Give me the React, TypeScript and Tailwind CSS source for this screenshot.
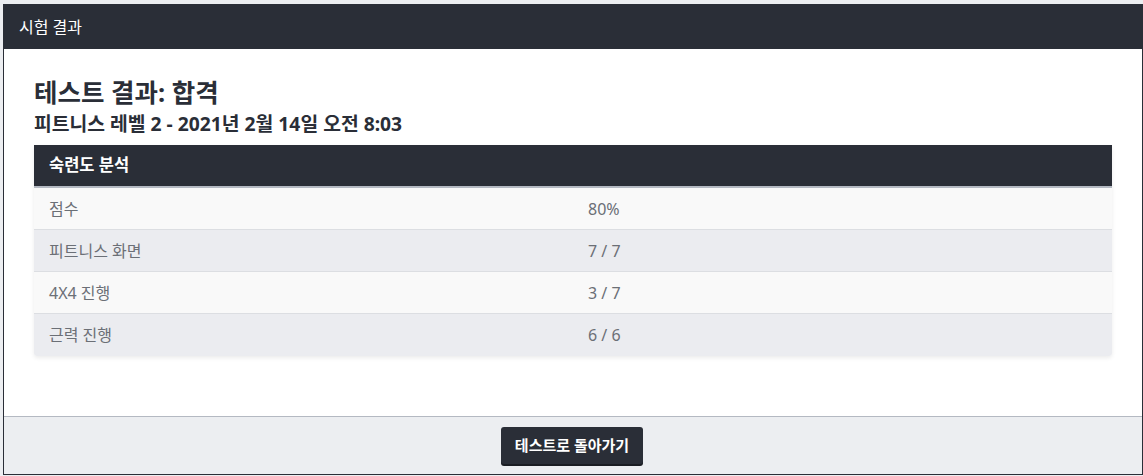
const rows = [
  { label: "점수", value: "80%" },
  { label: "피트니스 화면", value: "7 / 7" },
  { label: "4X4 진행", value: "3 / 7" },
  { label: "근력 진행", value: "6 / 6" },
];

export default function App() {
  return (
    <div
      className="w-[1143px] h-[476px] bg-[#eceef1] pt-[4px] pl-[3px]"
      style={{ fontFamily: '"Noto Sans", "Noto Sans CJK KR", sans-serif' }}
    >
      <div className="w-[1140px] h-[471px] bg-white border border-[#2a2e37] flex flex-col">
        {/* modal header */}
        <div className="h-[44px] bg-[#2a2e37] text-white text-[16px] flex items-center px-[15px] shrink-0">
          시험 결과
        </div>

        {/* body */}
        <div className="flex-1 px-[30px] pt-[27px]">
          <h1 className="text-[25.5px] font-bold text-[#2a2e37] leading-[32px]">테스트 결과: 합격</h1>
          <h2 className="text-[19.3px] font-bold text-[#2a2e37] leading-[26px] mt-[3px]">
            피트니스 레벨 2 - 2021년 2월 14일 오전 8:03
          </h2>

          <div className="mt-[8px] rounded-b-[3px] overflow-hidden shadow-[0_2px_4px_rgba(0,0,0,0.08)]">
            <div className="h-[41px] bg-[#2a2e37] text-white text-[16.5px] font-bold flex items-center px-[15px] border-b-2 border-[#b4b9c2] box-content">
              숙련도 분석
            </div>
            {rows.map((r, i) => (
              <div
                key={r.label}
                className={
                  "h-[42px] flex items-center text-[16px] text-[#6b6f76] " +
                  (i % 2 === 0 ? "bg-[#f9f9f9]" : "bg-[#ebecf0]") +
                  (i < rows.length - 1 ? " border-b border-[#dcdee2]" : "")
                }
              >
                <div className="w-1/2 px-[15px]">{r.label}</div>
                <div className="w-1/2 px-[15px]">{r.value}</div>
              </div>
            ))}
          </div>
        </div>

        {/* footer */}
        <div className="h-[58px] bg-[#eceef1] border-t border-[#b4b9c2] flex items-center justify-center shrink-0">
          <button className="h-[37px] px-[14px] bg-[#2a2e37] text-white text-[15px] font-bold rounded-[3px] shadow-[0_2px_0_#1a1d23] -ml-[2px]">
            테스트로 돌아가기
          </button>
        </div>
      </div>
    </div>
  );
}
